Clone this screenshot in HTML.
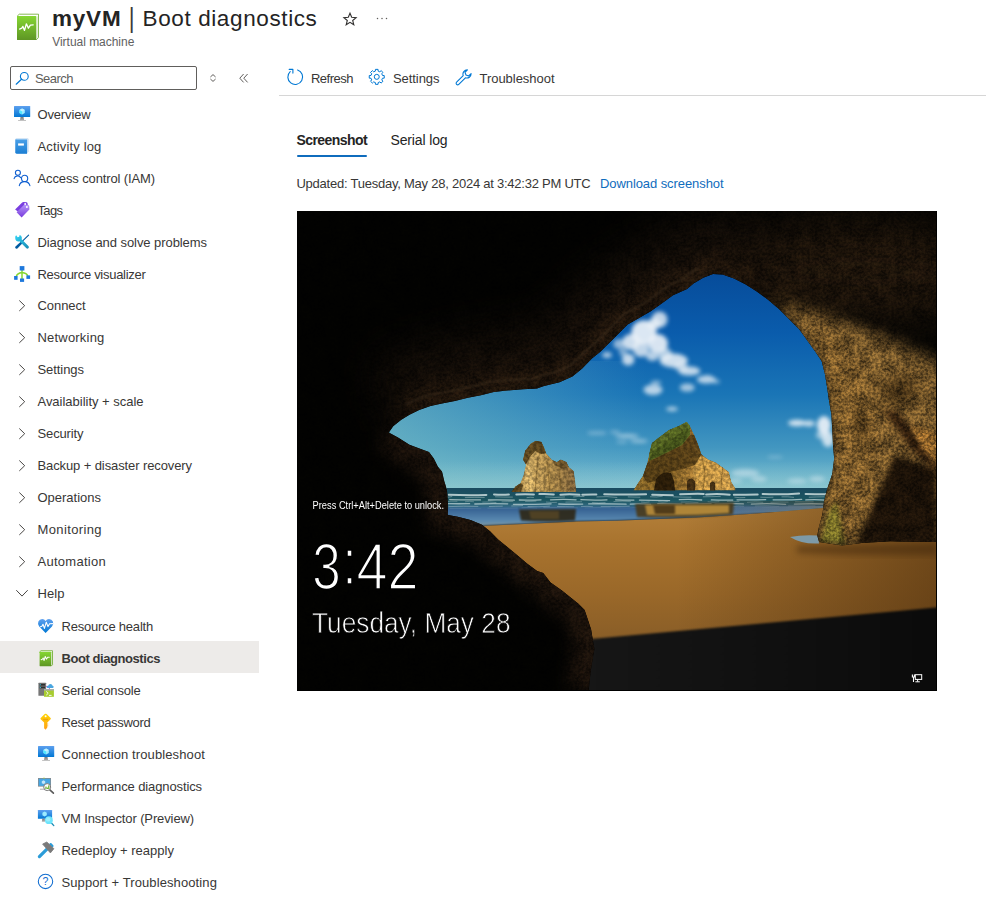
<!DOCTYPE html>
<html lang="en">
<head>
<meta charset="utf-8">
<title>myVM | Boot diagnostics</title>
<style>
html,body{margin:0;padding:0;background:#fff;}
body{width:986px;height:912px;position:relative;overflow:hidden;font-family:"Liberation Sans",sans-serif;}
.t{position:absolute;white-space:pre;}
.abs{position:absolute;}
.sel{left:0;top:641px;width:259px;height:32px;background:#edebe9;}
.search{left:10px;top:66px;width:185px;height:22px;border:1px solid #605e5c;border-radius:2px;background:#fff;}
.tbline{left:279px;top:95px;width:707px;height:1px;background:#d6d6d6;}
.tabline{left:297px;top:155px;width:70px;height:2px;background:#0f6cbd;border-radius:1px;}
.photo{left:297px;top:211px;width:640px;height:480px;background:#000;overflow:hidden;}
svg{display:block;}
</style>
</head>
<body>
<div class="abs sel"></div>
<div class="abs search"></div>
<div class="abs tbline"></div>
<div class="abs tabline"></div>
<span class="t" id="pipe" style="left:128.2px;top:1.2px;font-size:28px;line-height:34px;color:#3a3a3a;transform:scaleX(.8);transform-origin:3.6px 0;">|</span>
<svg class="abs" width="0" height="0" style="left:0;top:0"><defs>
<linearGradient id="gGreen" x1="0" y1="0" x2="0" y2="1"><stop offset="0" stop-color="#86d633"/><stop offset="1" stop-color="#5e9624"/></linearGradient>
<linearGradient id="gBlue" x1="0" y1="0" x2="0" y2="1"><stop offset="0" stop-color="#5ea0ef"/><stop offset="1" stop-color="#0078d4"/></linearGradient>
<linearGradient id="gBook" x1="0" y1="0" x2="0" y2="1"><stop offset="0" stop-color="#4ba0e8"/><stop offset="1" stop-color="#1b7fd4"/></linearGradient>
<linearGradient id="gGray" x1="0" y1="0" x2="0" y2="1"><stop offset="0" stop-color="#7a7a7a"/><stop offset="1" stop-color="#b3b3b3"/></linearGradient>
<linearGradient id="gTag" x1="0" y1="0" x2="0" y2="1"><stop offset="0" stop-color="#b796f9"/><stop offset="1" stop-color="#773adc"/></linearGradient>
<linearGradient id="gKey" x1="0" y1="0" x2="0" y2="1"><stop offset="0" stop-color="#ffd400"/><stop offset="1" stop-color="#fea11b"/></linearGradient>
<linearGradient id="gWr" x1="0" y1="0" x2="1" y2="1"><stop offset="0" stop-color="#32d4f5"/><stop offset="1" stop-color="#198ab3"/></linearGradient>
</defs></svg>
<svg class="abs" style="left:16px;top:13px" width="25" height="29" viewBox="0 0 25 29" ><g transform="scale(1)">
<path d="M1.2,3.1 L3.3,1.2 H22.5 V24.6 L20.3,26.8 Z" fill="#fff" stroke="#6aa82a" stroke-width="0.80" stroke-linejoin="round"/>
<path d="M21.2,3.4 V25.4" stroke="#6aa82a" stroke-width="0.50" opacity=".5"/>
<rect x="1" y="3.1" width="19.3" height="23.9" rx="0.6" fill="url(#gGreen)"/>
<path d="M3.6,16.1 L5.8,15.2 L6.9,13.4 L8.5,17.4 L10.4,10.8 L12.4,15.2 L14.4,12.1 L17.2,11.9" fill="none" stroke="#fff" stroke-width="1.3" stroke-linejoin="round" stroke-linecap="round"/>
</g></svg>
<svg class="abs" style="left:38.9px;top:649.6px" width="15" height="18" viewBox="0 0 15 18" ><g transform="scale(0.6)">
<path d="M1.2,3.1 L3.3,1.2 H22.5 V24.6 L20.3,26.8 Z" fill="#fff" stroke="#6aa82a" stroke-width="1.33" stroke-linejoin="round"/>
<path d="M21.2,3.4 V25.4" stroke="#6aa82a" stroke-width="0.83" opacity=".5"/>
<rect x="1" y="3.1" width="19.3" height="23.9" rx="0.6" fill="url(#gGreen)"/>
<path d="M3.6,16.1 L5.8,15.2 L6.9,13.4 L8.5,17.4 L10.4,10.8 L12.4,15.2 L14.4,12.1 L17.2,11.9" fill="none" stroke="#fff" stroke-width="1.7" stroke-linejoin="round" stroke-linecap="round"/>
</g></svg>
<svg class="abs" style="left:342px;top:11px" width="16" height="16" viewBox="0 0 16 16" ><path d="M8,2.2 L9.7,6.3 L14.1,6.6 L10.7,9.5 L11.8,13.8 L8,11.4 L4.2,13.8 L5.3,9.5 L1.9,6.6 L6.3,6.3 Z" fill="none" stroke="#323130" stroke-width="1.1" stroke-linejoin="miter"/></svg>
<svg class="abs" style="left:375px;top:16px" width="14" height="5" viewBox="0 0 14 5" ><circle cx="2.5" cy="2.5" r=".75" fill="#605e5c"/><circle cx="7" cy="2.5" r=".75" fill="#605e5c"/><circle cx="11.5" cy="2.5" r=".75" fill="#605e5c"/></svg>
<svg class="abs" style="left:14px;top:71px" width="16" height="16" viewBox="0 0 16 16" ><circle cx="10.3" cy="5.4" r="3.9" fill="none" stroke="#0078d4" stroke-width="1.1"/><path d="M7.5,8.2 L2.2,13.2" stroke="#0078d4" stroke-width="1.2" stroke-linecap="round"/></svg>
<svg class="abs" style="left:208px;top:72px" width="10" height="12" viewBox="0 0 10 12" ><path d="M2.4,5 L5,2.6 L7.6,5 M2.4,7 L5,9.4 L7.6,7" fill="none" stroke="#605e5c" stroke-width="1"/></svg>
<svg class="abs" style="left:238px;top:72px" width="12" height="12" viewBox="0 0 12 12" ><path d="M5.6,2 L1.8,6.2 L5.6,10.4 M9.6,2 L5.8,6.2 L9.6,10.4" fill="none" stroke="#605e5c" stroke-width="1"/></svg>
<svg class="abs" style="left:286px;top:68px" width="18" height="18" viewBox="0 0 18 18" ><path d="M11.6,2.0 A7.4,7.4 0 1 1 4.2,3.6" fill="none" stroke="#0078d4" stroke-width="1.1" stroke-linecap="round"/><path d="M3.2,1.4 H6.9 V5.1" fill="none" stroke="#0078d4" stroke-width="1.1" stroke-linecap="round" stroke-linejoin="round"/></svg>
<svg class="abs" style="left:368px;top:68px" width="18" height="18" viewBox="0 0 18 18" ><path d="M16.24,7.54 L16.24,10.16 L14.49,10.23 L13.78,11.93 L14.97,13.22 L13.12,15.07 L11.83,13.88 L10.13,14.59 L10.06,16.34 L7.44,16.34 L7.37,14.59 L5.67,13.88 L4.38,15.07 L2.53,13.22 L3.72,11.93 L3.01,10.23 L1.26,10.16 L1.26,7.54 L3.01,7.47 L3.72,5.77 L2.53,4.48 L4.38,2.63 L5.67,3.82 L7.37,3.11 L7.44,1.36 L10.06,1.36 L10.13,3.11 L11.83,3.82 L13.12,2.63 L14.97,4.48 L13.78,5.77 L14.49,7.47Z" fill="none" stroke="#0078d4" stroke-width="1" stroke-linejoin="round"/><circle cx="8.75" cy="8.85" r="2.5" fill="none" stroke="#0078d4" stroke-width="1"/></svg>
<svg class="abs" style="left:455px;top:68px" width="18" height="18" viewBox="0 0 18 18" ><path d="M12.4,1.9 A4.3,4.3 0 0 0 8.2,7.6 L1.6,14.2 A1.5,1.5 0 0 0 3.8,16.4 L10.4,9.8 A4.3,4.3 0 0 0 16.1,5.6 L13.6,8.0 L11.0,7.0 L10.0,4.4 Z" fill="none" stroke="#0078d4" stroke-width="1.1" stroke-linejoin="round"/></svg>
<svg class="abs" style="left:13.9px;top:106px" width="18" height="16" viewBox="0 0 18 16" ><rect x="0" y="0" width="16.2" height="11" rx=".5" fill="url(#gBlue)"/>
<path d="M6.5,11 H9.5 L10.1,14 H12 V14.8 H4.1 V14 H6Z" fill="url(#gGray)"/>
<path d="M8.1,2.4 L10.8,3.9 V7 L8.1,8.6 L5.4,7 V3.9Z" fill="#9cebff"/><path d="M8.1,2.4 L10.8,3.9 L8.1,5.5 L5.4,3.9Z" fill="#c3f1ff"/><path d="M8.1,5.5 V8.6 L5.4,7 V3.9Z" fill="#50e6ff"/></svg>
<svg class="abs" style="left:37.9px;top:746px" width="18" height="16" viewBox="0 0 18 16" ><rect x="0" y="0" width="16.2" height="11" rx=".5" fill="url(#gBlue)"/>
<path d="M6.5,11 H9.5 L10.1,14 H12 V14.8 H4.1 V14 H6Z" fill="url(#gGray)"/>
<path d="M8.1,2.4 L10.8,3.9 V7 L8.1,8.6 L5.4,7 V3.9Z" fill="#9cebff"/><path d="M8.1,2.4 L10.8,3.9 L8.1,5.5 L5.4,3.9Z" fill="#c3f1ff"/><path d="M8.1,5.5 V8.6 L5.4,7 V3.9Z" fill="#50e6ff"/></svg>
<svg class="abs" style="left:15px;top:138px" width="15" height="17" viewBox="0 0 15 17" ><path d="M0.4,1.6 Q0.4,0.2 1.8,0.2 H12.2 Q13.6,0.2 13.6,1.6 V13.6 L12,15.7 H1.8 Q0.4,15.7 0.4,14.3Z" fill="#c3dbf2"/>
<path d="M0.3,2.4 Q0.3,1 1.7,1 H12 V15.7 H1.7 Q0.3,15.7 0.3,14.3Z" fill="url(#gBook)"/>
<path d="M1.2,0.9 H12.4 V1.4 H1.2Z" fill="#fff" opacity=".85"/>
<rect x="3.1" y="5.4" width="5.8" height="2.2" fill="#fff"/></svg>
<svg class="abs" style="left:13px;top:169px" width="18" height="18" viewBox="0 0 18 18" ><circle cx="4.9" cy="3.8" r="2.5" fill="none" stroke="#0f5fd0" stroke-width="1.1"/>
<path d="M1.1,9.6 Q1.6,7.2 4.3,6.9 Q6.4,6.8 7.6,8.6" fill="none" stroke="#0f5fd0" stroke-width="1.1" stroke-linecap="round"/>
<circle cx="11.6" cy="9.4" r="3.1" fill="none" stroke="#0f5fd0" stroke-width="1.1"/>
<path d="M6.3,16.6 Q7.2,12.6 11.6,12.6 Q15.8,12.6 16.9,16.6" fill="none" stroke="#0f5fd0" stroke-width="1.1" stroke-linecap="round"/></svg>
<svg class="abs" style="left:14px;top:201px" width="17" height="18" viewBox="0 0 17 18" ><path d="M1.1,8.6 L8.2,1.4 Q8.8,0.9 9.6,1 L12.6,1.3 Q13.5,1.5 13.6,2.4 L13.9,5.2 L6.6,12.6Z" fill="#7a3fe0"/>
<path d="M2.6,11.2 L9.9,3.9 Q10.5,3.4 11.3,3.5 L14.2,3.9 Q15.1,4.1 15.2,5 L15.4,7.9 Q15.4,8.6 14.9,9.1 L7.6,16.6Z" fill="url(#gTag)"/>
<circle cx="11.2" cy="3.1" r="1" fill="#fff"/><circle cx="12.9" cy="5.9" r="1" fill="#fff"/></svg>
<svg class="abs" style="left:14px;top:234px" width="17" height="16" viewBox="0 0 17 16" ><path d="M14.6,1.1 L8.2,7.4" stroke="#005ba1" stroke-width="1.1" stroke-linecap="round"/>
<path d="M7.6,7.0 L9.2,8.6 L3.4,14.4 Q2.4,15.2 1.5,14.3 Q0.7,13.4 1.5,12.6Z" fill="#005ba1"/>
<path d="M1.2,3.6 Q1.0,2.2 2.2,1.2 L3.6,3.2 L5.2,2.8 L5.6,1.0 Q7.4,1.2 7.8,3.2 Q8.0,4.4 7.6,5.2 L14.6,12.2 Q15.3,13.2 14.4,14.2 Q13.4,15 12.4,14.3 L5.4,7.3 Q3.6,7.9 2.2,6.7 Q1.0,5.6 1.2,3.6Z" fill="url(#gWr)"/></svg>
<svg class="abs" style="left:13px;top:265px" width="18" height="18" viewBox="0 0 18 18" ><path d="M9,5 V14 M9,7.6 Q4.2,8.2 3.2,11.6 M9,7.6 Q13.8,8.2 14.9,11.2" fill="none" stroke="#86d633" stroke-width="1.5"/>
<rect x="6.7" y="1.1" width="4.7" height="4.4" fill="#1e78dc"/><rect x="1.1" y="11" width="3.5" height="3.8" fill="#1e78dc"/>
<rect x="7" y="13.5" width="4.1" height="3.4" fill="#1e78dc"/><rect x="13.4" y="10.4" width="3.7" height="3.5" fill="#1e78dc"/></svg>
<svg class="abs" style="left:17px;top:299px" width="10" height="13" viewBox="0 0 10 13" ><path d="M2.3,1.5 L7.7,6.7 L2.3,11.9" fill="none" stroke="#484644" stroke-width="1"/></svg>
<svg class="abs" style="left:17px;top:331px" width="10" height="13" viewBox="0 0 10 13" ><path d="M2.3,1.5 L7.7,6.7 L2.3,11.9" fill="none" stroke="#484644" stroke-width="1"/></svg>
<svg class="abs" style="left:17px;top:363px" width="10" height="13" viewBox="0 0 10 13" ><path d="M2.3,1.5 L7.7,6.7 L2.3,11.9" fill="none" stroke="#484644" stroke-width="1"/></svg>
<svg class="abs" style="left:17px;top:395px" width="10" height="13" viewBox="0 0 10 13" ><path d="M2.3,1.5 L7.7,6.7 L2.3,11.9" fill="none" stroke="#484644" stroke-width="1"/></svg>
<svg class="abs" style="left:17px;top:427px" width="10" height="13" viewBox="0 0 10 13" ><path d="M2.3,1.5 L7.7,6.7 L2.3,11.9" fill="none" stroke="#484644" stroke-width="1"/></svg>
<svg class="abs" style="left:17px;top:459px" width="10" height="13" viewBox="0 0 10 13" ><path d="M2.3,1.5 L7.7,6.7 L2.3,11.9" fill="none" stroke="#484644" stroke-width="1"/></svg>
<svg class="abs" style="left:17px;top:491px" width="10" height="13" viewBox="0 0 10 13" ><path d="M2.3,1.5 L7.7,6.7 L2.3,11.9" fill="none" stroke="#484644" stroke-width="1"/></svg>
<svg class="abs" style="left:17px;top:523px" width="10" height="13" viewBox="0 0 10 13" ><path d="M2.3,1.5 L7.7,6.7 L2.3,11.9" fill="none" stroke="#484644" stroke-width="1"/></svg>
<svg class="abs" style="left:17px;top:555px" width="10" height="13" viewBox="0 0 10 13" ><path d="M2.3,1.5 L7.7,6.7 L2.3,11.9" fill="none" stroke="#484644" stroke-width="1"/></svg>
<svg class="abs" style="left:15px;top:588px" width="14" height="10" viewBox="0 0 14 10" ><path d="M1.3,2.2 L7,8.1 L12.7,2.2" fill="none" stroke="#484644" stroke-width="1"/></svg>
<svg class="abs" style="left:37px;top:618px" width="18" height="16" viewBox="0 0 18 16" ><path d="M8.6,15 L2.2,8.6 Q0.2,6.2 1.4,3.4 Q2.6,0.9 5.2,0.9 Q7.4,0.9 8.6,2.9 Q9.8,0.9 12,0.9 Q14.8,0.9 15.9,3.4 Q17,6.2 15,8.6Z" fill="url(#gBlue)"/>
<path d="M3.4,8.7 L4.9,8.3 L6,6.2 L7.4,10.4 L9.3,4.2 L11,8.6 L12.6,5.8 L15.6,5.6" fill="none" stroke="#fff" stroke-width="1.1" stroke-linejoin="round" stroke-linecap="round"/></svg>
<svg class="abs" style="left:38px;top:682px" width="17" height="16" viewBox="0 0 17 16" ><rect x="0.4" y="0.8" width="7.7" height="13" rx=".4" fill="#767676"/>
<rect x="1.6" y="1.9" width="5.4" height="1.7" fill="#2f2f2f"/><rect x="1.6" y="4.6" width="5.4" height="1.7" fill="#2f2f2f"/>
<rect x="1.8" y="2.2" width="1.1" height="1.1" fill="#32bedd"/><rect x="1.8" y="4.9" width="1.1" height="1.1" fill="#32bedd"/>
<path d="M9.4,6 Q8.4,5.8 8.6,4.6 Q9,3.6 10.2,3.8 Q10.6,2 12.4,1.9 Q14.2,2 14.6,3.8 Q15.8,4 15.7,5.1 Q15.5,6 14.6,6Z" fill="#4aa6e0"/>
<path d="M8.1,4.4 L9,4.4 M11.4,6 V7" stroke="#b044c8" stroke-width=".8"/>
<rect x="6" y="7.1" width="9.9" height="7.7" fill="#a7cc30"/><rect x="6" y="7.1" width="9.9" height="1.4" fill="#a9a9b8"/>
<path d="M8.2,9.4 L10.2,11.3 L8.2,13.2 M11,13.4 H13.6" fill="none" stroke="#fff" stroke-width=".9"/></svg>
<svg class="abs" style="left:39px;top:713px" width="14" height="18" viewBox="0 0 14 18" ><path d="M6.6,0.8 Q7.3,0.6 7.9,1.2 L11.6,4.9 Q12.2,5.6 11.6,6.3 L8.3,9.6 V14.6 L6.6,16.8 L5.1,15.2 V9.6 L1.7,6.3 Q1.1,5.6 1.7,4.9 L5.4,1.2 Q6,0.7 6.6,0.8Z" fill="url(#gKey)"/>
<rect x="4.2" y="5.8" width="4.8" height="1.4" fill="#e89a0c" opacity=".8"/><circle cx="6.6" cy="3.2" r="1" fill="#fff"/>
<path d="M8.3,11 H9.2 M8.3,12.8 H9.2" stroke="#fea11b" stroke-width=".8"/></svg>
<svg class="abs" style="left:37px;top:777px" width="18" height="18" viewBox="0 0 18 18" ><rect x="1" y="1" width="13" height="8.6" fill="#8a8a8a"/><rect x="1.7" y="1.7" width="11.6" height="7.2" fill="#47a6e2"/>
<rect x="6.4" y="0.6" width="1.2" height=".9" fill="#b4d62c"/>
<path d="M6.5,3.3 L8.2,4.2 V6.2 L6.5,7.1 L4.8,6.2 V4.2Z" fill="#c3e6fa"/>
<path d="M3,12.2 H8" stroke="#a0a0a0" stroke-width=".9"/>
<path d="M12.6,12.6 L16.4,16.2" stroke="#5a5a5a" stroke-width="1.6" stroke-linecap="round"/>
<circle cx="10.2" cy="10.1" r="3.5" fill="#fff" stroke="#7a7a7a" stroke-width="1"/>
<rect x="8.4" y="9.6" width="1.2" height="2.4" fill="#5fa81e"/><rect x="10" y="10.6" width=".9" height="1.4" fill="#5fa81e"/><rect x="11.2" y="8.4" width="1.2" height="3.6" fill="#5fa81e"/></svg>
<svg class="abs" style="left:37px;top:809px" width="18" height="18" viewBox="0 0 18 18" ><rect x="0.9" y="1" width="14.2" height="8.8" rx=".4" fill="url(#gBlue)"/>
<path d="M5.2,9.8 H7.8 L8,12.8 H4.6 L5,12.2Z" fill="url(#gGray)"/>
<path d="M7.6,2.6 L9.8,3.8 V6.2 L7.6,7.4 L5.4,6.2 V3.8Z" fill="#9cebff"/>
<path d="M14.2,13.8 L16.8,16.6" stroke="#198ab3" stroke-width="1.3" stroke-linecap="round"/>
<circle cx="11.9" cy="11.2" r="3.9" fill="#6de4fb"/><circle cx="11.2" cy="10.4" r="2.2" fill="#a6f0ff" opacity=".8"/></svg>
<svg class="abs" style="left:37px;top:841px" width="18" height="18" viewBox="0 0 18 18" ><path d="M2.4,15.6 L11.2,6.8" stroke="#2b9cd8" stroke-width="3.2" stroke-linecap="round"/>
<path d="M13.6,3.2 L15.4,5" stroke="#2b9cd8" stroke-width="2.4" stroke-linecap="round"/>
<path d="M5.6,3.1 L9.8,1 L16.9,7.7 L13.4,11.9Z" fill="#7a7a7a" stroke="#7a7a7a" stroke-width=".8" stroke-linejoin="round"/></svg>
<svg class="abs" style="left:37px;top:873px" width="17" height="17" viewBox="0 0 17 17" ><circle cx="8.5" cy="8.4" r="7.2" fill="none" stroke="#0f6cd0" stroke-width="1.05"/>
<text x="8.5" y="12.2" text-anchor="middle" font-family="'Liberation Sans',sans-serif" font-size="10.5" fill="#0f6cd0">?</text></svg>
<span class="t" style="left:37.48px;top:106.50px;font-size:13px;line-height:16px;letter-spacing:-0.146px;color:#383736;">Overview</span>
<span class="t" style="left:37.48px;top:138.50px;font-size:13px;line-height:16px;letter-spacing:0.157px;color:#383736;">Activity log</span>
<span class="t" style="left:37.48px;top:170.50px;font-size:13px;line-height:16px;letter-spacing:-0.120px;color:#383736;">Access control (IAM)</span>
<span class="t" style="left:37.48px;top:202.50px;font-size:13px;line-height:16px;letter-spacing:-0.612px;color:#383736;">Tags</span>
<span class="t" style="left:37.48px;top:234.50px;font-size:13px;line-height:16px;letter-spacing:-0.065px;color:#383736;">Diagnose and solve problems</span>
<span class="t" style="left:37.48px;top:266.50px;font-size:13px;line-height:16px;letter-spacing:-0.285px;color:#383736;">Resource visualizer</span>
<span class="t" style="left:37.48px;top:297.50px;font-size:13px;line-height:16px;letter-spacing:-0.057px;color:#383736;">Connect</span>
<span class="t" style="left:37.48px;top:329.50px;font-size:13px;line-height:16px;letter-spacing:0.199px;color:#383736;">Networking</span>
<span class="t" style="left:37.48px;top:361.50px;font-size:13px;line-height:16px;letter-spacing:-0.058px;color:#383736;">Settings</span>
<span class="t" style="left:37.48px;top:393.50px;font-size:13px;line-height:16px;letter-spacing:-0.016px;color:#383736;">Availability + scale</span>
<span class="t" style="left:37.48px;top:425.50px;font-size:13px;line-height:16px;letter-spacing:-0.119px;color:#383736;">Security</span>
<span class="t" style="left:37.48px;top:457.50px;font-size:13px;line-height:16px;letter-spacing:-0.101px;color:#383736;">Backup + disaster recovery</span>
<span class="t" style="left:37.48px;top:489.50px;font-size:13px;line-height:16px;letter-spacing:-0.007px;color:#383736;">Operations</span>
<span class="t" style="left:37.48px;top:521.50px;font-size:13px;line-height:16px;letter-spacing:0.382px;color:#383736;">Monitoring</span>
<span class="t" style="left:37.48px;top:553.50px;font-size:13px;line-height:16px;letter-spacing:0.275px;color:#383736;">Automation</span>
<span class="t" style="left:37.48px;top:585.50px;font-size:13px;line-height:16px;letter-spacing:0.067px;color:#383736;">Help</span>
<span class="t" style="left:61.48px;top:618.50px;font-size:13px;line-height:16px;letter-spacing:-0.210px;color:#383736;">Resource health</span>
<span class="t" style="left:61.48px;top:650.50px;font-size:13px;line-height:16px;letter-spacing:-0.433px;color:#383736;font-weight:700;">Boot diagnostics</span>
<span class="t" style="left:61.48px;top:682.50px;font-size:13px;line-height:16px;letter-spacing:-0.188px;color:#383736;">Serial console</span>
<span class="t" style="left:61.48px;top:714.50px;font-size:13px;line-height:16px;letter-spacing:-0.300px;color:#383736;">Reset password</span>
<span class="t" style="left:61.48px;top:746.50px;font-size:13px;line-height:16px;letter-spacing:0.112px;color:#383736;">Connection troubleshoot</span>
<span class="t" style="left:61.48px;top:778.50px;font-size:13px;line-height:16px;letter-spacing:-0.111px;color:#383736;">Performance diagnostics</span>
<span class="t" style="left:61.48px;top:810.50px;font-size:13px;line-height:16px;letter-spacing:-0.117px;color:#383736;">VM Inspector (Preview)</span>
<span class="t" style="left:61.48px;top:842.50px;font-size:13px;line-height:16px;letter-spacing:0.007px;color:#383736;">Redeploy + reapply</span>
<span class="t" style="left:61.48px;top:874.50px;font-size:13px;line-height:16px;letter-spacing:0.106px;color:#383736;">Support + Troubleshooting</span>
<span class="t" style="left:51.90px;top:4.70px;font-size:22.5px;line-height:28px;letter-spacing:0.830px;color:#242424;font-weight:700;">myVM</span>
<span class="t" style="left:142.50px;top:4.70px;font-size:22.5px;line-height:28px;letter-spacing:0.618px;color:#242424;">Boot diagnostics</span>
<span class="t" style="left:52.22px;top:34.84px;font-size:12px;line-height:15px;letter-spacing:-0.028px;color:#616161;">Virtual machine</span>
<span class="t" style="left:34.98px;top:70.50px;font-size:13px;line-height:16px;letter-spacing:-0.531px;color:#605e5c;">Search</span>
<span class="t" style="left:310.98px;top:70.50px;font-size:13px;line-height:16px;letter-spacing:-0.502px;color:#383736;">Refresh</span>
<span class="t" style="left:392.98px;top:70.50px;font-size:13px;line-height:16px;letter-spacing:-0.058px;color:#383736;">Settings</span>
<span class="t" style="left:479.48px;top:70.50px;font-size:13px;line-height:16px;letter-spacing:-0.032px;color:#383736;">Troubleshoot</span>
<span class="t" style="left:296.44px;top:131.15px;font-size:14px;line-height:18px;letter-spacing:-0.569px;color:#242424;font-weight:700;">Screenshot</span>
<span class="t" style="left:390.44px;top:131.15px;font-size:14px;line-height:18px;letter-spacing:-0.131px;color:#242424;">Serial log</span>
<span class="t" style="left:296.48px;top:175.50px;font-size:13px;line-height:16px;letter-spacing:-0.238px;color:#383736;">Updated: Tuesday, May 28, 2024 at 3:42:32 PM UTC</span>
<span class="t" style="left:599.98px;top:175.50px;font-size:13px;line-height:16px;letter-spacing:-0.080px;color:#0f6cbd;">Download screenshot</span>
<div class="abs photo">
<svg width="640" height="480" viewBox="0 0 640 480">
<defs>
<linearGradient id="sky" x1="0" y1="0" x2="0" y2="1" gradientUnits="objectBoundingBox">
<stop offset="0.20" stop-color="#064a98"/><stop offset="0.44" stop-color="#0a5cac"/><stop offset="0.66" stop-color="#1a75b6"/>
<stop offset="0.85" stop-color="#4296c0"/><stop offset="1" stop-color="#7cc0d0"/></linearGradient>
<linearGradient id="skyL" x1="90" y1="0" x2="350" y2="0" gradientUnits="userSpaceOnUse">
<stop offset="0" stop-color="#7cc0c4" stop-opacity=".6"/><stop offset=".45" stop-color="#70b8c4" stop-opacity=".36"/><stop offset="1" stop-color="#6ab0d0" stop-opacity="0"/></linearGradient>
<linearGradient id="haze" x1="0" y1="250" x2="0" y2="278" gradientUnits="userSpaceOnUse"><stop offset="0" stop-color="#a4d2d2" stop-opacity="0"/><stop offset="1" stop-color="#a4d2d2" stop-opacity=".4"/></linearGradient>
<linearGradient id="sea" x1="0" y1="277" x2="0" y2="299" gradientUnits="userSpaceOnUse">
<stop offset="0" stop-color="#1a4a60"/><stop offset=".55" stop-color="#1c5660"/><stop offset="1" stop-color="#3f7596"/></linearGradient>
<linearGradient id="film" x1="0" y1="296" x2="0" y2="315" gradientUnits="userSpaceOnUse">
<stop offset="0" stop-color="#315c8e"/><stop offset=".7" stop-color="#5888b0"/><stop offset="1" stop-color="#7f97a0"/></linearGradient>
<linearGradient id="filmR" x1="380" y1="0" x2="530" y2="0" gradientUnits="userSpaceOnUse"><stop offset="0" stop-color="#86aec8" stop-opacity="0"/><stop offset="1" stop-color="#86aec8" stop-opacity=".7"/></linearGradient>
<linearGradient id="sand" x1="0" y1="297" x2="0" y2="440" gradientUnits="userSpaceOnUse">
<stop offset="0" stop-color="#b4803a"/><stop offset=".25" stop-color="#a8732e"/><stop offset=".6" stop-color="#9a6829"/><stop offset="1" stop-color="#855b27"/></linearGradient>
<linearGradient id="sandR" x1="380" y1="0" x2="640" y2="0" gradientUnits="userSpaceOnUse">
<stop offset="0" stop-color="#4a2c0c" stop-opacity="0"/><stop offset="1" stop-color="#4a2c0c" stop-opacity=".6"/></linearGradient>
<linearGradient id="isl1" x1="214" y1="0" x2="280" y2="0" gradientUnits="userSpaceOnUse">
<stop offset="0" stop-color="#6e5222"/><stop offset=".25" stop-color="#c4a25e"/><stop offset=".6" stop-color="#a88648"/><stop offset="1" stop-color="#7e623a"/></linearGradient>
<linearGradient id="isl2" x1="336" y1="0" x2="440" y2="0" gradientUnits="userSpaceOnUse">
<stop offset="0" stop-color="#8e6c2a"/><stop offset=".35" stop-color="#7a5a22"/><stop offset=".6" stop-color="#a87c36"/><stop offset="1" stop-color="#b88a44"/></linearGradient>
<radialGradient id="wallLight" cx="560" cy="230" r="190" gradientUnits="userSpaceOnUse" gradientTransform="translate(560 230) scale(.55 1) translate(-560 -230)">
<stop offset="0" stop-color="#8e6a2c"/><stop offset=".45" stop-color="#7a5824" stop-opacity=".9"/><stop offset="1" stop-color="#3a260e" stop-opacity="0"/></radialGradient>
<linearGradient id="shad" x1="290" y1="0" x2="640" y2="0" gradientUnits="userSpaceOnUse"><stop offset="0" stop-color="#161616"/><stop offset="1" stop-color="#0b0b0b"/></linearGradient>
<clipPath id="cave"><path clip-rule="evenodd" d="M0,0 H640 V480 H0 Z M92.2,220.9 L96.2,215.2 L104.3,208.7 L112.5,203.8 L122.2,199.0 L133.5,194.9 L145.0,192.5 L157.9,190.0 L170.9,186.8 L183.9,184.3 L196.8,181.0 L209.8,179.5 L226.0,178.2 L240.0,177.5 L246.2,175.2 L262.5,171.2 L275.4,165.5 L285.2,157.4 L294.9,147.6 L303.0,141.1 L311.1,133.0 L320.9,123.3 L330.6,113.5 L342.0,107.1 L353.3,100.6 L364.7,92.5 L376.0,84.3 L390.0,78.1 L396.5,72.5 L406.2,66.8 L416.0,63.0 L425.7,63.5 L437.0,67.6 L448.4,73.3 L459.8,80.6 L471.1,88.7 L482.5,98.4 L492.2,108.2 L502.0,117.9 L510.1,129.2 L518.2,140.6 L524.6,150.0 L527.9,163.0 L530.3,177.6 L531.9,189.0 L534.4,203.5 L535.2,218.2 L536.0,234.4 L537.2,247.4 L535.2,263.0 L530.3,277.6 L527.0,290.6 L525.4,303.5 L522.2,315.0 L520.2,324.6 L522.2,331.0 L545.0,334.4 L564.4,332.0 L593.6,330.3 L618.0,330.8 L640.0,331.0 L640.0,480.0 L291.7,480.0 L292.5,470.3 L294.1,457.4 L295.7,447.6 L297.4,437.9 L295.7,428.2 L294.1,418.4 L290.9,408.7 L287.6,399.0 L281.1,392.5 L273.0,386.0 L264.9,379.5 L253.5,371.4 L246.2,362.0 L240.1,360.0 L230.3,352.8 L220.6,344.6 L210.9,336.5 L201.1,328.4 L193.0,320.3 L184.9,313.8 L173.5,309.0 L160.6,305.7 L150.8,304.0 L150.8,291.1 L150.0,279.7 L148.8,275.0 L147.3,270.3 L145.0,260.6 L140.9,255.7 L136.8,247.6 L132.0,241.0 L123.8,237.9 L112.5,233.8 L101.0,226.5 L92.2,221.7 Z"/></clipPath>
<clipPath id="open"><path d="M92.2,220.9 L96.2,215.2 L104.3,208.7 L112.5,203.8 L122.2,199.0 L133.5,194.9 L145.0,192.5 L157.9,190.0 L170.9,186.8 L183.9,184.3 L196.8,181.0 L209.8,179.5 L226.0,178.2 L240.0,177.5 L246.2,175.2 L262.5,171.2 L275.4,165.5 L285.2,157.4 L294.9,147.6 L303.0,141.1 L311.1,133.0 L320.9,123.3 L330.6,113.5 L342.0,107.1 L353.3,100.6 L364.7,92.5 L376.0,84.3 L390.0,78.1 L396.5,72.5 L406.2,66.8 L416.0,63.0 L425.7,63.5 L437.0,67.6 L448.4,73.3 L459.8,80.6 L471.1,88.7 L482.5,98.4 L492.2,108.2 L502.0,117.9 L510.1,129.2 L518.2,140.6 L524.6,150.0 L527.9,163.0 L530.3,177.6 L531.9,189.0 L534.4,203.5 L535.2,218.2 L536.0,234.4 L537.2,247.4 L535.2,263.0 L530.3,277.6 L527.0,290.6 L525.4,303.5 L522.2,315.0 L520.2,324.6 L522.2,331.0 L545.0,334.4 L564.4,332.0 L593.6,330.3 L618.0,330.8 L640.0,331.0 L640.0,480.0 L291.7,480.0 L292.5,470.3 L294.1,457.4 L295.7,447.6 L297.4,437.9 L295.7,428.2 L294.1,418.4 L290.9,408.7 L287.6,399.0 L281.1,392.5 L273.0,386.0 L264.9,379.5 L253.5,371.4 L246.2,362.0 L240.1,360.0 L230.3,352.8 L220.6,344.6 L210.9,336.5 L201.1,328.4 L193.0,320.3 L184.9,313.8 L173.5,309.0 L160.6,305.7 L150.8,304.0 L150.8,291.1 L150.0,279.7 L148.8,275.0 L147.3,270.3 L145.0,260.6 L140.9,255.7 L136.8,247.6 L132.0,241.0 L123.8,237.9 L112.5,233.8 L101.0,226.5 L92.2,221.7 Z"/></clipPath>
<filter id="b05" color-interpolation-filters="sRGB" x="-5%" y="-50%" width="110%" height="200%"><feGaussianBlur stdDeviation=".5"/></filter>
<filter id="b1" color-interpolation-filters="sRGB" x="-20%" y="-20%" width="140%" height="140%"><feGaussianBlur stdDeviation="1"/></filter>
<filter id="b2" color-interpolation-filters="sRGB" x="-20%" y="-20%" width="140%" height="140%"><feGaussianBlur stdDeviation="2"/></filter>
<filter id="b3" color-interpolation-filters="sRGB" x="-30%" y="-30%" width="160%" height="160%"><feGaussianBlur stdDeviation="3.2"/></filter>
<filter id="b8" color-interpolation-filters="sRGB" x="-30%" y="-30%" width="160%" height="160%"><feGaussianBlur stdDeviation="8"/></filter>
<filter id="b12" color-interpolation-filters="sRGB" x="-50%" y="-50%" width="200%" height="200%"><feGaussianBlur stdDeviation="11"/></filter>
<filter id="b24" color-interpolation-filters="sRGB" x="-50%" y="-50%" width="200%" height="200%"><feGaussianBlur stdDeviation="24"/></filter>
<filter id="b8u" color-interpolation-filters="sRGB" x="-100" y="-100" width="840" height="680" filterUnits="userSpaceOnUse"><feGaussianBlur stdDeviation="8"/></filter>
<filter id="b24u" color-interpolation-filters="sRGB" x="-100" y="-100" width="840" height="680" filterUnits="userSpaceOnUse"><feGaussianBlur stdDeviation="22"/></filter>
<filter id="b16" color-interpolation-filters="sRGB" x="-50%" y="-50%" width="200%" height="200%"><feGaussianBlur stdDeviation="16"/></filter>
<filter id="rock2" x="200" y="200" width="260" height="90" color-interpolation-filters="sRGB" filterUnits="userSpaceOnUse" primitiveUnits="userSpaceOnUse">
<feTurbulence type="fractalNoise" baseFrequency="0.3" numOctaves="3" seed="23" result="n"/>
<feColorMatrix in="n" type="matrix" values="2.4 0 0 0 -.7  2.4 0 0 0 -.7  2.4 0 0 0 -.7  0 0 0 0 1" result="g"/>
<feComposite in="SourceGraphic" in2="g" operator="arithmetic" k1="0.4" k2="0.78" k3="0" k4="0" result="t"/>
<feComposite in="t" in2="SourceGraphic" operator="in"/>
</filter>
<filter id="rock" x="0" y="0" width="640" height="480" color-interpolation-filters="sRGB" filterUnits="userSpaceOnUse" primitiveUnits="userSpaceOnUse">
<feTurbulence type="fractalNoise" baseFrequency="0.38" numOctaves="3" seed="11" result="n"/>
<feColorMatrix in="n" type="matrix" values="2.4 0 0 0 -.7  2.4 0 0 0 -.7  2.4 0 0 0 -.7  0 0 0 0 1" result="g1"/>
<feTurbulence type="fractalNoise" baseFrequency="0.07" numOctaves="2" seed="4" result="m"/>
<feColorMatrix in="m" type="matrix" values="3 0 0 0 -1  3 0 0 0 -1  3 0 0 0 -1  0 0 0 0 1" result="g2"/>
<feComposite in="g1" in2="g2" operator="arithmetic" k1="0" k2=".6" k3=".4" k4="0" result="g"/>
<feComposite in="SourceGraphic" in2="g" operator="arithmetic" k1="1.0" k2="0.48" k3="0" k4="0"/>
</filter>
</defs>
<rect width="640" height="480" fill="#000"/>
<g clip-path="url(#open)">
<rect x="0" y="0" width="640" height="278" fill="url(#sky)"/>
<rect x="0" y="150" width="640" height="128" fill="url(#skyL)"/>
<rect x="0" y="250" width="640" height="28" fill="url(#haze)"/>
<g fill="#eef3f8" filter="url(#b2)"><ellipse cx="362.5" cy="108.5" rx="8" ry="8" opacity="0.8"/><ellipse cx="357" cy="113" rx="7" ry="6" opacity="0.7"/><ellipse cx="346.9" cy="121.2" rx="12.5" ry="12" opacity="0.92"/><ellipse cx="361" cy="132.6" rx="10" ry="9.5" opacity="0.9"/><ellipse cx="334" cy="131" rx="8.5" ry="8" opacity="0.85"/><ellipse cx="331.2" cy="148.5" rx="6.2" ry="6" opacity="0.8"/><ellipse cx="322" cy="133" rx="5.7" ry="5" opacity="0.6"/><ellipse cx="355.4" cy="145" rx="6.4" ry="5" opacity="0.75"/><ellipse cx="344" cy="138" rx="8" ry="8" opacity="0.8"/><ellipse cx="310" cy="144" rx="5" ry="3" opacity="0.7"/><ellipse cx="326" cy="141" rx="4" ry="4" opacity="0.5"/><ellipse cx="376.7" cy="149.6" rx="14" ry="7" opacity="0.85"/><ellipse cx="368" cy="143" rx="7" ry="6" opacity="0.7"/><ellipse cx="392.3" cy="160" rx="11" ry="4.6" opacity="0.8"/><ellipse cx="409.3" cy="168.5" rx="9.5" ry="4" opacity="0.75"/><ellipse cx="419" cy="170.5" rx="4" ry="2" opacity="0.5"/><ellipse cx="384" cy="156" rx="7" ry="4" opacity="0.6"/><ellipse cx="356" cy="178.7" rx="9.5" ry="5.2" opacity="0.75"/><ellipse cx="359" cy="171.6" rx="5.5" ry="2" opacity="0.55"/><ellipse cx="390.2" cy="176.6" rx="7.5" ry="4" opacity="0.65"/><ellipse cx="375" cy="198" rx="6" ry="2.2" opacity="0.7"/><ellipse cx="411" cy="165" rx="3" ry="1" opacity="0.4"/><ellipse cx="500" cy="212" rx="9" ry="3.2" opacity="0.85"/><ellipse cx="512" cy="212.5" rx="6" ry="3" opacity="0.8"/><ellipse cx="527" cy="214" rx="7" ry="9" opacity="0.9"/><ellipse cx="531" cy="228" rx="6" ry="8" opacity="0.8"/><ellipse cx="524" cy="224" rx="5" ry="4" opacity="0.6"/><ellipse cx="330" cy="225" rx="12" ry="2.2" opacity="0.5"/><ellipse cx="342" cy="230" rx="9" ry="2" opacity="0.45"/><ellipse cx="318" cy="221" rx="5" ry="1.5" opacity="0.4"/><ellipse cx="300" cy="222" rx="10" ry="1.6" opacity="0.4"/><ellipse cx="325" cy="231" rx="6" ry="1.5" opacity="0.35"/><ellipse cx="448" cy="262" rx="14" ry="4" opacity="0.45"/><ellipse cx="462" cy="268" rx="8" ry="3" opacity="0.4"/><ellipse cx="438" cy="270" rx="7" ry="2.5" opacity="0.35"/><ellipse cx="478" cy="246" rx="8" ry="1.3" opacity="0.3"/><ellipse cx="500" cy="270" rx="10" ry="3" opacity="0.35"/><ellipse cx="520" cy="268" rx="8" ry="3" opacity="0.4"/></g>
<rect x="0" y="277" width="640" height="24" fill="url(#sea)"/>
<g stroke="#d4e4e4" stroke-linecap="round" fill="none" filter="url(#b05)" opacity=".85"><path d="M151.7,283.7 q18.9,0.8 37.7,0.2 M197.0,283.4 q7.5,0.8 14.9,0.1 M219.3,283.4 q8.8,-0.5 17.6,0.0 M242.4,283.1 q7.2,-0.4 14.4,0.4 M263.4,283.7 q9.6,-0.7 19.1,0.1 M285.3,283.8 q7.0,-0.5 14.1,-0.3 M307.2,283.2 q21.0,0.8 41.9,0.0 M355.2,283.8 q10.3,0.3 20.6,0.5 M383.1,283.3 q11.8,-0.6 23.6,-0.4 M409.1,283.5 q11.8,-0.9 23.6,0.2 M436.8,283.7 q12.0,-0.0 23.9,-0.2 M465.6,283.0 q18.3,0.9 36.5,-0.5 M508.6,282.9 q20.5,0.5 41.0,-0.1" stroke-width="2.0" opacity="0.95"/><path d="M148.1,285.9 q3.3,0.8 6.7,-0.3 M168.3,286.6 q9.5,-0.3 19.0,-0.1 M198.5,285.8 q8.4,0.4 16.9,0.3 M230.0,286.6 q3.3,-0.7 6.5,-0.2 M248.6,286.0 q9.4,0.8 18.9,0.0 M276.6,285.9 q5.2,-0.8 10.4,-0.4 M299.9,285.9 q10.0,-0.8 20.0,0.5 M331.2,285.9 q5.8,0.2 11.7,0.3 M353.4,285.8 q6.0,0.7 11.9,-0.5 M376.3,285.8 q8.9,0.4 17.7,0.4 M406.3,285.8 q8.5,-0.1 17.0,-0.4 M437.8,286.2 q5.1,0.9 10.1,0.4 M463.7,286.2 q6.2,0.4 12.3,-0.0 M484.9,285.8 q5.8,-0.2 11.7,0.5 M512.2,286.2 q7.4,-0.3 14.8,-0.4" stroke-width="0.9" opacity="0.5"/><path d="M152.7,288.6 q15.4,0.5 30.8,0.3 M191.4,289.0 q13.0,-0.2 25.9,0.2 M222.3,289.0 q10.8,0.3 21.7,-0.2 M253.5,288.8 q12.8,-0.9 25.6,0.0 M283.9,288.7 q13.1,0.6 26.1,0.1 M318.6,288.8 q9.2,0.4 18.3,0.3 M342.4,289.1 q15.1,0.3 30.2,0.5 M382.3,288.7 q11.2,-0.6 22.4,0.3 M414.3,288.9 q10.7,0.4 21.5,0.2 M440.0,288.8 q14.4,0.3 28.7,-0.1 M476.1,288.8 q14.3,0.4 28.6,-0.5 M508.8,288.9 q10.3,-0.5 20.6,0.2" stroke-width="1.3" opacity="0.8"/><path d="M148.3,290.7 q5.8,-0.8 11.7,-0.4 M168.4,290.7 q4.1,-0.8 8.2,-0.0 M185.7,291.1 q6.7,-0.5 13.3,0.4 M205.0,290.8 q5.4,-0.2 10.9,-0.4 M228.5,290.5 q5.2,0.2 10.5,-0.4 M249.4,291.1 q5.0,0.8 10.1,0.3 M268.8,291.1 q7.9,-0.2 15.8,-0.4 M295.3,291.5 q6.4,0.8 12.8,0.1 M316.9,290.5 q8.4,-0.7 16.7,0.1 M344.5,291.1 q3.8,0.7 7.7,-0.1 M361.7,290.8 q4.4,0.9 8.7,-0.1 M384.1,291.1 q8.5,-0.4 17.0,0.5 M411.0,290.8 q5.5,0.9 11.0,-0.0 M430.3,290.6 q5.9,0.2 11.7,-0.1 M450.4,291.3 q7.7,-0.9 15.4,0.0 M473.9,291.3 q8.6,-0.5 17.2,-0.2 M498.4,290.8 q8.9,0.2 17.9,-0.0 M527.4,291.2 q6.6,-0.7 13.2,0.3" stroke-width="0.8" opacity="0.45"/><path d="M151.2,292.7 q10.7,0.1 21.4,-0.0 M177.8,293.0 q16.4,-0.8 32.9,-0.2 M216.4,293.3 q18.8,0.1 37.7,-0.5 M261.7,293.0 q12.0,0.4 24.0,0.1 M291.6,292.8 q18.8,-0.2 37.5,0.4 M333.3,293.2 q10.2,-0.8 20.3,0.3 M360.8,292.7 q12.1,0.5 24.1,0.4 M388.7,292.9 q12.7,-0.0 25.4,-0.2 M418.0,293.2 q14.2,-0.8 28.4,-0.3 M454.4,293.1 q17.1,-0.9 34.2,0.2 M497.4,293.1 q20.0,-0.8 40.0,0.3" stroke-width="1.3" opacity="0.75"/><path d="M151.9,295.6 q14.5,-0.7 29.0,-0.2 M192.3,295.5 q6.5,-0.2 13.0,-0.3 M214.7,295.0 q5.4,-0.2 10.9,-0.4 M231.0,295.6 q10.8,0.7 21.5,-0.4 M260.5,295.5 q8.1,-0.0 16.3,0.4 M284.4,295.6 q5.6,-0.6 11.1,0.1 M304.1,295.5 q14.1,0.2 28.2,-0.2 M341.1,295.7 q7.5,0.0 15.1,-0.4 M362.9,295.6 q8.7,-0.6 17.4,0.2 M389.9,295.6 q5.9,-0.7 11.7,-0.4 M410.7,295.8 q7.4,-0.0 14.8,-0.2 M436.1,295.6 q5.3,-0.8 10.6,-0.3 M458.3,295.1 q11.8,-0.7 23.6,0.5 M491.6,295.0 q13.2,0.2 26.4,-0.1 M524.7,295.5 q8.3,-0.3 16.7,-0.1" stroke-width="0.9" opacity="0.55"/><path d="M153.0,297.5 q15.4,-0.1 30.8,0.4 M190.9,297.3 q14.7,0.4 29.4,-0.1 M224.9,296.9 q7.4,-0.8 14.9,0.4 M246.7,296.7 q16.9,-0.1 33.8,0.4 M288.2,297.2 q12.6,-0.7 25.1,-0.3 M318.3,297.1 q11.9,0.7 23.7,-0.3 M347.5,296.9 q10.6,-0.4 21.2,-0.3 M375.6,297.6 q7.4,-0.2 14.8,0.4 M398.6,297.2 q15.8,0.8 31.5,-0.4 M438.1,297.4 q10.8,0.4 21.6,-0.3 M464.9,296.9 q7.3,-0.8 14.6,-0.1 M489.4,297.0 q11.7,-0.1 23.5,-0.2 M521.3,296.9 q16.3,-0.5 32.7,0.2" stroke-width="0.9" opacity="0.5"/></g>
<path d="M140.0,297.0 L530.0,295.0 L526.0,297.0 L460.0,302.5 L400.0,306.5 L320.0,309.8 L280.0,310.5 L185.0,315.0 L150.0,305.0 Z" fill="url(#film)" filter="url(#b1)"/>
<path d="M380.0,296.0 L530.0,295.0 L526.0,297.0 L460.0,302.5 L400.0,306.5 L380.0,307.5 Z" fill="url(#filmR)"/>
<path d="M150.0,305.0 L185.0,315.0 L280.0,310.5 L320.0,309.8 L400.0,306.5 L460.0,302.5 L526.0,297.0 L640.0,297.0 L640.0,480.0 L0.0,480.0 L0.0,305.0 Z" fill="url(#sand)"/>
<rect x="380" y="290" width="260" height="190" fill="url(#sandR)"/>
<path d="M500,335 Q545,334 640,332 V344 Q560,345 500,342 Z" fill="#3a220a" opacity=".45" filter="url(#b3)"/>
<path d="M493,326 Q505,323.5 521,324.5 L522,332.5 Q505,333.5 493,326Z" fill="#7d9aa8"/>
<!-- reflections -->
<path d="M222,298.5 L279,298 L278,309.5 Q250,311.5 224,309.5Z" fill="#2e2818" opacity=".92" filter="url(#b1)"/>
<path d="M232,300 H262 V308 H234Z" fill="#6a5226" opacity=".55" filter="url(#b1)"/>
<path d="M338,293 L437,291.5 L436,303.5 Q390,308 340,306Z" fill="#4a3a1a" opacity=".9" filter="url(#b1)"/>
<path d="M348,294 H432 V302 Q390,305 350,304Z" fill="#c0923c" opacity=".85" filter="url(#b1)"/><path d="M356,294 H378 V303 H358Z" fill="#3a2a12" opacity=".8" filter="url(#b1)"/>
<!-- islands -->
<g filter="url(#rock2)">
<path d="M214.3,281.1 L218.4,275.5 L223.3,272.2 L226.5,264.1 L228.9,253.5 L226.0,248.7 L228.1,239.8 L233.8,232.5 L238.7,229.7 L244.4,230.8 L247.1,236.5 L249.2,242.2 L254.9,248.7 L259.8,251.1 L263.8,248.4 L269.5,251.1 L271.9,256.0 L276.8,260.0 L278.4,271.4 L279.3,281.0 Z" fill="url(#isl1)"/>
<path d="M228.9,253.5 L226,248.7 L228.1,239.8 L233.8,232.5 L238.7,229.7 L244.4,230.8 L247.1,236.5 L249.2,242.2 L244,243 L238,240 L233,246Z" fill="#4e3a16" opacity=".85"/>
<path d="M214.3,281.1 L218.4,275.5 L223.3,272.2 L226,274 L224,281Z" fill="#4e3a16" opacity=".8"/>
<path d="M254.9,248.7 L259.8,251.1 L263.8,248.4 L269.5,251.1 L271.9,256 L266,258 L258,254Z" fill="#5a4520" opacity=".7"/>
<path d="M250,250 L253,281 M262,256 L264,281 M241,246 L238,281" stroke="#6e5426" stroke-width="1.2" opacity=".55" fill="none"/>
<path d="M226,281 L228,262 L232,252 L236,262 L236,281Z" fill="#e0bc70" opacity=".5"/>
<path d="M336.2,279.5 L341.1,271.7 L346.0,264.4 L350.0,253.0 L352.5,241.7 L354.9,231.9 L362.2,226.2 L371.9,218.9 L381.7,214.9 L389.8,210.8 L393.0,214.9 L397.1,223.8 L401.1,233.5 L404.4,243.3 L410.9,248.2 L419.0,251.4 L425.5,256.3 L432.0,261.1 L434.4,270.9 L438.5,277.4 L438.5,279.5 Z" fill="url(#isl2)"/>
<path d="M398,236 L404,244 L411,249 L419,252 L431,261.5 L434,271 L437,279 H400 L396,262Z" fill="#d8a850" opacity=".6"/>
<path d="M352,250 L372,240 L384,234 L392,224 L397.1,223.8 L401.1,233.5 L404.4,243.3 L398,254 L386,258 L368,262 L358,270 L350,272 L346,264.4 L350,253Z" fill="#4e3814" opacity=".85"/>
<path d="M354.9,231.9 L362.2,226.2 L371.9,218.9 L381.7,214.9 L389.8,210.8 L393,214.9 L393,224 L385,234 L373,240 L361,246 L352,250 L352.5,241.7Z" fill="#566622"/>
<path d="M356,240 L372,230 L386,220 L391,216 L392,224 L384,234 L372,240 L360,246 L352,250Z" fill="#3c4a18" opacity=".6"/>
<path d="M357,279.5 L359,268 Q366,259 374,262 L377,270 L378,279.5Z" fill="#241808" opacity=".92"/>
<path d="M390,279.5 V270 Q394,265 398,270 V279.5Z M413,279.5 V272 Q415.5,269 418,272 V279.5Z" fill="#32220e" opacity=".85"/>
<path d="M404.4,243.3 L408,262 L406,279 M425.5,256.3 L424,279" stroke="#7a5a26" stroke-width="1.2" fill="none" opacity=".6"/>
</g>
<!-- shadow on sand -->
<path d="M270.0,430.1 L296.6,427.7 L660.0,394.6 L660.0,500.0 L270.0,500.0 Z" fill="url(#shad)" filter="url(#b1)"/>
</g>
<!-- cave rock -->
<g clip-path="url(#cave)">
<g filter="url(#rock)">
<g filter="url(#b8u)">
<g filter="url(#b24u)">
<rect x="-100" y="-100" width="840" height="680" fill="#020201"/>
<ellipse cx="560" cy="60" rx="150" ry="50" fill="#1e140a"/>
<path d="M104.3,208.7 L112.5,203.8 L122.2,199.0 L133.5,194.9 L145.0,192.5 L157.9,190.0 L170.9,186.8 L183.9,184.3 L196.8,181.0 L209.8,179.5 L226.0,178.2 L240.0,177.5 L246.2,175.2 L262.5,171.2 L275.4,165.5 L285.2,157.4 L294.9,147.6 L303.0,141.1 L311.1,133.0 L320.9,123.3 L330.6,113.5 L342.0,107.1 L353.3,100.6 L364.7,92.5 L376.0,84.3 L390.0,78.1 L396.5,72.5 L406.2,66.8 L416.0,63.0 L425.7,63.5 L437.0,67.6 L448.4,73.3" fill="none" stroke="#150e08" stroke-width="110" stroke-linejoin="round"/>
</g>
<path d="M112.5,203.8 L122.2,199.0 L133.5,194.9 L145.0,192.5 L157.9,190.0 L170.9,186.8 L183.9,184.3 L196.8,181.0 L209.8,179.5 L226.0,178.2 L240.0,177.5 L246.2,175.2 L262.5,171.2 L275.4,165.5 L285.2,157.4 L294.9,147.6 L303.0,141.1 L311.1,133.0 L320.9,123.3 L330.6,113.5 L342.0,107.1 L353.3,100.6 L364.7,92.5 L376.0,84.3 L390.0,78.1 L396.5,72.5 L406.2,66.8 L416.0,63.0 L425.7,63.5 L437.0,67.6 L448.4,73.3" fill="none" stroke="#20150b" stroke-width="34" stroke-linejoin="round"/>
<path d="M92.2,221.7 L101.0,226.5 L112.5,233.8 L123.8,237.9 L132.0,241.0 L136.8,247.6 L140.9,255.7 L145.0,260.6 L147.3,270.3 L148.8,275.0 L150.0,279.7 L150.8,291.1 L150.8,304.0 L160.6,305.7 L173.5,309.0 L184.9,313.8 L193.0,320.3 L201.1,328.4 L210.9,336.5 L220.6,344.6 L230.3,352.8 L240.1,360.0 L246.2,362.0 L253.5,371.4 L264.9,379.5 L273.0,386.0 L281.1,392.5 L287.6,399.0 L290.9,408.7 L294.1,418.4 L295.7,428.2 L297.4,437.9 L295.7,447.6 L294.1,457.4 L292.5,470.3 L291.7,480.0" fill="none" stroke="#1a110a" stroke-width="40" stroke-linejoin="round"/>
<path d="M471.1,88.7 L482.5,98.4 L492.2,108.2 L502.0,117.9 L510.1,129.2 L518.2,140.6 L524.6,150.0 L527.9,163.0 L530.3,177.6 L531.9,189.0 L534.4,203.5 L535.2,218.2 L536.0,234.4 L537.2,247.4 L535.2,263.0 L530.3,277.6 L527.0,290.6 L525.4,303.5 L522.2,315.0 L520.2,324.6 L522.2,331.0 L545.0,334.4 L564.4,332.0 L593.6,330.3 L618.0,330.8 L640.0,331.0 L660.0,331.0 L660.0,160.0 L610.0,136.0 L560.0,116.0 L520.0,102.0 L490.0,94.0 Z" fill="#75572a"/>
</g>
<path d="M492.2,108.2 L502.0,117.9 L510.1,129.2 L518.2,140.6 L524.6,150.0 L527.9,163.0 L530.3,177.6 L531.9,189.0 L534.4,203.5 L535.2,218.2 L536.0,234.4 L537.2,247.4 L535.2,263.0 L530.3,277.6 L527.0,290.6 L525.4,303.5 L522.2,315.0 L520.2,324.6 L522.2,331.0 L560.0,334.0 L575.0,300.0 L580.0,230.0 L570.0,170.0 L545.0,135.0 L515.0,112.0 Z" fill="#7e5c2a" filter="url(#b8)" opacity=".85"/>
<ellipse cx="603" cy="180" rx="20" ry="14" fill="#3a2810" opacity=".8" filter="url(#b8)"/><ellipse cx="565" cy="215" rx="9" ry="14" fill="#4a3416" opacity=".5" filter="url(#b3)"/>
<path d="M597,244 L640,258 V336 H558 Z" fill="#1c1208" filter="url(#b3)"/>
<path d="M584,200 Q600,215 612,236 L640,262 V250 Q620,225 600,200Z" fill="#2e1c0c" filter="url(#b3)"/>
<path d="M614,215 L640,222 V254 Q625,240 614,215Z" fill="#9a6a2c" filter="url(#b2)"/>
<path d="M526,322 Q530,298 540,290 L548,333 L524,331Z" fill="#5e6a1e" opacity=".55" filter="url(#b2)"/>
</g>
<path d="M112.5,203.8 L122.2,199.0 L133.5,194.9 L145.0,192.5 L157.9,190.0 L170.9,186.8 L183.9,184.3 L196.8,181.0 L209.8,179.5 L226.0,178.2 L240.0,177.5 L246.2,175.2 L262.5,171.2 L275.4,165.5 L285.2,157.4 L294.9,147.6 L303.0,141.1 L311.1,133.0 L320.9,123.3 L330.6,113.5 L342.0,107.1 L353.3,100.6 L364.7,92.5 L376.0,84.3 L390.0,78.1 L396.5,72.5 L406.2,66.8" fill="none" stroke="#4a3826" stroke-width="1.6" filter="url(#b1)" transform="translate(-4 -10)" opacity=".6"/>
</g>
<g fill="#fff" font-family="'Liberation Sans',sans-serif">
<text x="15.6" y="297.6" font-size="10.2" textLength="131.5" lengthAdjust="spacingAndGlyphs">Press Ctrl+Alt+Delete to unlock.</text>
<text font-size="64.5" stroke="#000" stroke-width="1.7" paint-order="fill stroke"><tspan x="15.2" y="378.4" textLength="28.5" lengthAdjust="spacingAndGlyphs">3</tspan><tspan x="45.6" y="372.6" textLength="14" lengthAdjust="spacingAndGlyphs">:</tspan><tspan x="59.4" y="378.4" textLength="62" lengthAdjust="spacingAndGlyphs">42</tspan></text>
<text x="15" y="422.4" font-size="30" textLength="198.5" lengthAdjust="spacingAndGlyphs" stroke="#000" stroke-width=".8" paint-order="fill stroke">Tuesday, May 28</text>
</g>
<g fill="none" stroke="#fff" stroke-width="1">
<rect x="618.3" y="463.7" width="6.4" height="4.7"/><path d="M620.6,468.4 V470.6 M618.4,470.8 H622.8"/>
<path d="M615.4,463.4 V466.4 M617.4,463.4 V466.4 M615.2,466 H617.8 M616.5,466.4 V471" stroke-width="1.1"/></g>
<path d="M639.5,0 V480 M0,479.5 H640" stroke="#000" stroke-width="1"/>
</svg>
</div>
</body>
</html>
